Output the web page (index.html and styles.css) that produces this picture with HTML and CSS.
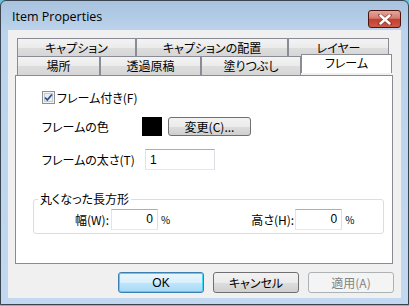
FILE: index.html
```html
<!DOCTYPE html>
<html lang="ja">

<head>
  <meta charset="UTF-8" />
  <title>Item Properties</title>
  <link rel="stylesheet" href="styles.css">
</head>

<body>
  <div class="window">
    <div class="titlebar">
      <span class="title">Item Properties</span>
      <div class="close">
        <svg width="14" height="11" viewBox="0 0 14 11">
          <path d="M2 1 L12 10 M12 1 L2 10" stroke="#5a1a14" stroke-width="4" stroke-linecap="round" opacity="0.5" />
          <path d="M2.5 1.5 L11.5 9.5 M11.5 1.5 L2.5 9.5" stroke="#fff" stroke-width="2.4" stroke-linecap="round" />
        </svg>
      </div>
    </div>

    <div class="client">
      <div class="tabs">
        <div class="tab-row">
          <div class="tab tab-caption">キャプション</div>
          <div class="tab tab-placement">キャプションの配置</div>
          <div class="tab tab-layer">レイヤー</div>
        </div>
        <div class="tab-row">
          <div class="tab tab-place">場所</div>
          <div class="tab tab-trans">透過原稿</div>
          <div class="tab tab-fill">塗りつぶし</div>
          <div class="tab tab-frame active">フレーム</div>
        </div>
      </div>

      <div class="panel">
        <div class="row check-row">
          <span class="checkbox">
            <svg width="13" height="13" viewBox="0 0 13 13">
              <rect x="0.5" y="0.5" width="12" height="12" fill="#f4f4f4" stroke="#8f8f8f" />
              <rect x="2.5" y="2.5" width="8" height="8" fill="#e8eef5" stroke="#c3cbd4" />
              <path d="M3 6.5 L5.3 9 L10 3.5" fill="none" stroke="#2a4f8f" stroke-width="1.8" />
            </svg>
          </span>
          <span>フレーム付き(F)</span>
        </div>

        <div class="row color-row">
          <span class="label label-color">フレームの色</span>
          <span class="swatch"></span>
          <button class="btn btn-change">変更(C)...</button>
        </div>

        <div class="row width-row">
          <span class="label label-width">フレームの太さ(T)</span>
          <input class="textbox tb-width" value="1">
        </div>

        <fieldset class="group">
          <legend>丸くなった長方形</legend>
          <span class="glabel glabel-w">幅(W):</span>
          <input class="textbox tb-num" value="0">
          <span class="pct">%</span>
          <span class="glabel glabel-h">高さ(H):</span>
          <input class="textbox tb-num" value="0">
          <span class="pct">%</span>
        </fieldset>
      </div>

      <div class="buttons">
        <button class="btn btn-ok">OK</button>
        <button class="btn">キャンセル</button>
        <button class="btn btn-disabled">適用(A)</button>
      </div>
    </div>
  </div>
</body>

</html>
```

FILE: styles.css
```css
body {
  margin: 0;
  width: 409px;
  height: 306px;
  background: #6cc0dc;
  font-family: "Noto Sans CJK JP", sans-serif;
  font-size: 12px;
  font-feature-settings: "palt";
  color: #000;
}

.window {
  box-sizing: border-box;
  width: 409px;
  height: 305px;
  border: 1px solid #3b4552;
  border-radius: 6px 6px 0 0;
  background: linear-gradient(#a9c3df, #bbd3ec 30px, #c1d8f0);
  padding: 0 7px 7px 7px;
}

.titlebar {
  height: 29px;
  display: flex;
  align-items: center;
  justify-content: space-between;
}

.title {
  font-family: "Open Sans", sans-serif;
  font-size: 12.5px;
  padding-left: 4px;
  padding-top: 2px;
  color: #000;
}

.close {
  box-sizing: border-box;
  width: 33px;
  height: 18px;
  margin-top: 7px;
  border: 1px solid #4d1410;
  border-radius: 3px;
  background: linear-gradient(#e3a79d, #d67b6e 45%, #c2402f 52%, #cc5a47);
  display: flex;
  align-items: center;
  justify-content: center;
}

.client {
  box-sizing: border-box;
  height: 268px;
  background: #f0f0f0;
  padding: 8px 7px 0 7px;
}

/* tabs */
.tabs {
  padding-left: 2px;
}

.tab-row {
  display: flex;
}

.tab {
  box-sizing: border-box;
  height: 18px;
  border: 1px solid #898c95;
  border-bottom: none;
  background: linear-gradient(#f3f3f3, #ebebeb 50%, #dddddd 51%, #d6d6d6);
  display: flex;
  align-items: center;
  justify-content: center;
  line-height: 1;
}

.tab-caption { width: 119px; }
.tab-placement { width: 152px; }
.tab-layer { width: 101px; }

.tab-row + .tab-row .tab {
  height: 19px;
}

.tab-place { width: 83px; }
.tab-trans { width: 101px; }
.tab-fill { width: 100px; }

.tab.active {
  width: 91px;
  position: relative;
  z-index: 1;
  height: 22px;
  margin-top: -2px;
  margin-bottom: -1px;
  background: #fff;
  padding-bottom: 2px;
}

.panel {
  box-sizing: border-box;
  width: 378px;
  height: 189px;
  border: 1px solid #898c95;
  background: #fff;
  padding: 15px 0 0 26px;
}

.row {
  display: flex;
  align-items: center;
}

.check-row {
  height: 13px;
}

.checkbox {
  width: 13px;
  height: 13px;
  margin-right: 2px;
}

.checkbox svg {
  display: block;
}

.color-row {
  margin-top: 13px;
  height: 19px;
}

.label-color { width: 100px; }

.swatch {
  width: 20px;
  height: 19px;
  background: #000;
  margin-right: 6px;
}

.btn {
  box-sizing: border-box;
  font-family: "Noto Sans CJK JP", sans-serif;
  font-feature-settings: "palt";
  font-size: 12px;
  color: #000;
  border: 1px solid #707070;
  border-radius: 3px;
  background: linear-gradient(#f2f2f2, #ebebeb 50%, #dddddd 51%, #cfcfcf);
  padding: 0;
  line-height: 1;
}

.btn-change {
  width: 83px;
  height: 19px;
}

.width-row {
  margin-top: 13px;
  height: 21px;
}

.label-width { width: 103px; }

.textbox {
  box-sizing: border-box;
  height: 21px;
  border: 1px solid #abadb3;
  border-color: #abadb3 #dbdfe6 #e3e9ef #e2e3ea;
  font-family: "Liberation Sans", sans-serif;
  font-size: 12px;
  padding: 0 4px;
  outline: none;
}

.tb-width {
  width: 70px;
}

.group {
  box-sizing: border-box;
  width: 351px;
  height: 41px;
  margin: 23px 0 0 -9px;
  border: 1px solid #d5dfe5;
  border-radius: 3px;
  padding: 0;
  display: flex;
  align-items: center;
}

.group legend {
  padding: 0 2px;
  margin-left: 4px;
  line-height: 1;
}

.glabel {
  text-align: right;
}

.glabel-w {
  width: 75px;
  padding-right: 2px;
}

.glabel-h {
  width: 124px;
  padding-right: 1px;
}

.tb-num {
  width: 47px;
  text-align: right;
}

.pct {
  font-size: 10px;
  margin-left: 3px;
}

.buttons {
  display: flex;
  justify-content: flex-end;
  gap: 9px;
  margin-top: 8px;
}

.buttons .btn {
  width: 86px;
  height: 21px;
}

.btn-ok {
  border-color: #3c7fb1;
  background: linear-gradient(#eaf6fd, #d9f0fc 50%, #bee6fd 51%, #a7d9f5);
  box-shadow: inset 0 0 0 1px #48d4f9;
  font-family: "Liberation Sans", sans-serif;
}

.btn-disabled {
  border-color: #adb2b5;
  background: #f4f4f4;
  color: #838383;
}
```
